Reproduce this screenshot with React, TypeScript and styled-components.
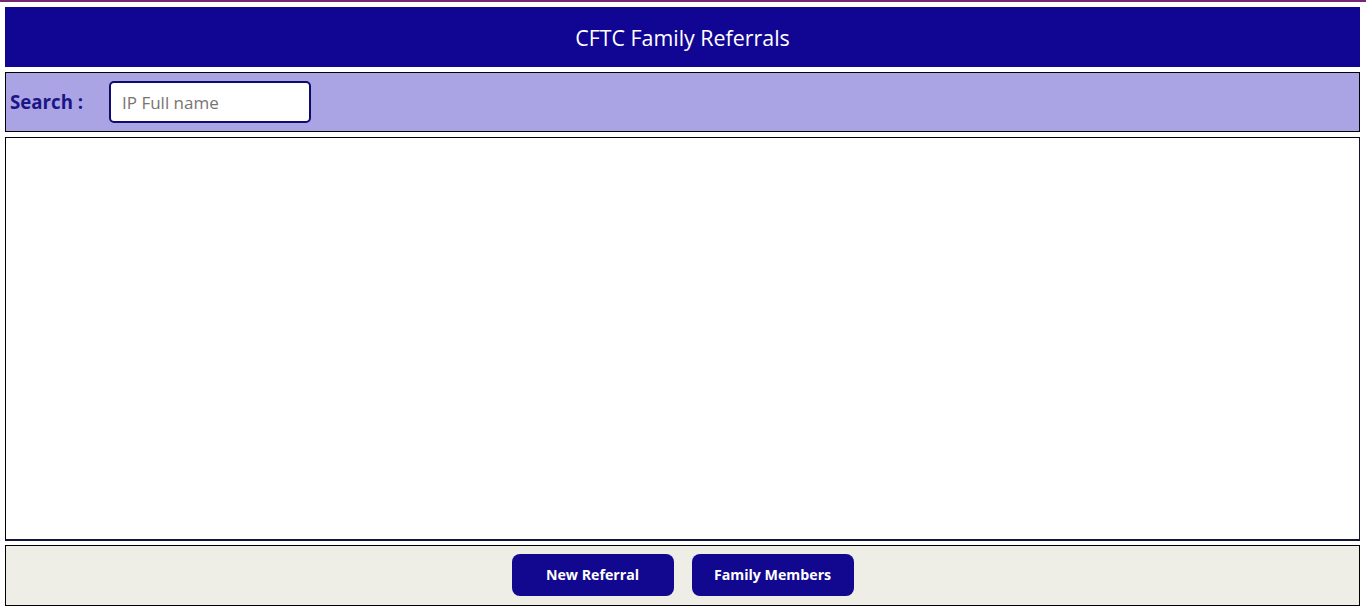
import * as React from "react";
import styled, { createGlobalStyle } from "styled-components";

const GlobalStyle = createGlobalStyle`
  html, body {
    margin: 0;
    padding: 0;
    background: #ffffff;
    font-family: "Open Sans", "Noto Sans", sans-serif;
  }
  * {
    box-sizing: border-box;
  }
`;

const TopStripe = styled.div`
  height: 2px;
  background: #742774;
`;

const Screen = styled.main`
  display: flex;
  flex-direction: column;
  gap: 5px;
  padding: 5px 6px 0 5px;
`;

const Header = styled.header`
  height: 60px;
  background: #110694;
  color: #ffffff;
  display: flex;
  align-items: center;
  justify-content: center;
  font-size: 21.4px;
`;

const SearchBar = styled.section`
  height: 60px;
  background: #aaa4e4;
  border: 1px solid #000000;
  display: flex;
  align-items: center;
  padding-left: 4px;
`;

const SearchLabel = styled.label`
  width: 99px;
  font-size: 18.7px;
  font-weight: 700;
  color: #1c1585;
  margin-top: -1px;
`;

const SearchInput = styled.input`
  width: 202px;
  height: 42px;
  border: 2px solid #0d0b6e;
  border-radius: 5px;
  background: #ffffff;
  padding: 0 11px;
  font-family: inherit;
  font-size: 17px;
  color: #222222;
  outline: none;

  &::placeholder {
    color: #7a7470;
  }
`;

const Gallery = styled.section`
  height: 404px;
  margin-bottom: -1px;
  background: #ffffff;
  border: 1px solid #000000;
  border-bottom: 2px solid #15153a;
  border-right-color: #15153a;
`;

const Footer = styled.footer`
  height: 61px;
  background: #efeee6;
  border: 1px solid #000000;
  display: flex;
  align-items: center;
  justify-content: center;
  gap: 18px;
  padding-bottom: 2px;
`;

const ActionButton = styled.button`
  width: 162px;
  height: 42px;
  border: none;
  border-radius: 8px;
  background: #12078f;
  color: #ffffff;
  font-family: inherit;
  font-size: 14.2px;
  font-weight: 700;
  cursor: pointer;
`;

export default function App() {
  const [query, setQuery] = React.useState("");

  return (
    <>
      <GlobalStyle />
      <TopStripe />
      <Screen>
        <Header>CFTC Family Referrals</Header>
        <SearchBar>
          <SearchLabel htmlFor="search">Search :</SearchLabel>
          <SearchInput
            id="search"
            placeholder="IP Full name"
            value={query}
            onChange={(e) => setQuery(e.target.value)}
          />
        </SearchBar>
        <Gallery />
        <Footer>
          <ActionButton>New Referral</ActionButton>
          <ActionButton>Family Members</ActionButton>
        </Footer>
      </Screen>
    </>
  );
}
